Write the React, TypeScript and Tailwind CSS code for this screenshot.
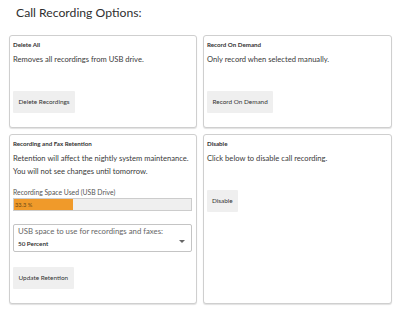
import type { ReactNode } from 'react'

function Card({ title, children }: { title: string; children: ReactNode }) {
  return (
    <div className="border border-[#cfcfcf] rounded-[3px] bg-white px-[3px] pt-[4px] shadow-[0_1px_1px_rgba(0,0,0,0.12)]">
      <div className="text-[6.2px] leading-[10px] font-bold text-[#333]">{title}</div>
      {children}
    </div>
  )
}

function Btn({ children, className = '' }: { children: ReactNode; className?: string }) {
  return (
    <button
      className={`h-[22px] px-[5.5px] bg-[#efefef] text-[6.4px] text-[#333] rounded-[1px] ${className}`}
    >
      {children}
    </button>
  )
}

export default function App() {
  return (
    <div
      className="w-[400px] h-[313px] bg-white overflow-hidden pl-[9px] pr-[8px] pt-[3px] text-[#3a3a3a]"
      style={{ fontFamily: 'Lato, "Open Sans", sans-serif' }}
    >
      {/* Header */}
      <h1 className="ml-[7px] text-[12.2px] leading-[20px] text-[#2f2f2f]">Call Recording Options:</h1>

      <div className="mt-[12px] grid grid-cols-[188px_189px] grid-rows-[93px_170px] gap-[6px]">
        <Card title="Delete All">
          <p className="mt-[3px] text-[7.6px] leading-[13px]">Removes all recordings from USB drive.</p>
          <Btn className="mt-[25px]">Delete Recordings</Btn>
        </Card>

        <Card title="Record On Demand">
          <p className="mt-[3px] text-[7.6px] leading-[13px]">Only record when selected manually.</p>
          <Btn className="mt-[25px]">Record On Demand</Btn>
        </Card>

        <Card title="Recording and Fax Retention">
          <p className="mt-[3px] text-[7.6px] leading-[13px]">
            Retention will affect the nightly system maintenance.
            <br />
            You will not see changes until tomorrow.
          </p>
          <div className="mt-[9px] text-[6.8px] leading-[10px] text-[#555]">Recording Space Used (USB Drive)</div>
          <div className="mt-[1px] mr-[1px] h-[13px] bg-[#efefef] border border-[#cccccc] flex">
            <div
              className="h-full bg-[#f09a2a] text-[5.7px] leading-[11px] pl-[1px] text-[#6b4a18]"
              style={{ width: '33.3%' }}
            >
              33.3 %
            </div>
          </div>
          <div className="mt-[13px] mr-[1px] h-[28px] border border-[#c4c4c4] rounded-[2px] px-[4px] pt-[1px] flex items-end justify-between">
            <div className="self-start">
              <div className="text-[7.8px] leading-[11px] text-[#666]">USB space to use for recordings and faxes:</div>
              <div className="mt-[1px] text-[6.3px] leading-[11px] font-semibold text-[#222]">50 Percent</div>
            </div>
            <svg width="6" height="3" viewBox="0 0 6 3" className="mb-[8px] mr-[2px]">
              <path d="M0 0 L6 0 L3 3 Z" fill="#666" />
            </svg>
          </div>
          <Btn className="mt-[15px] h-[21px]">Update Retention</Btn>
        </Card>

        <Card title="Disable">
          <p className="mt-[3px] text-[7.6px] leading-[13px]">Click below to disable call recording.</p>
          <Btn className="mt-[25px] px-[5px]">Disable</Btn>
        </Card>
      </div>
    </div>
  )
}
